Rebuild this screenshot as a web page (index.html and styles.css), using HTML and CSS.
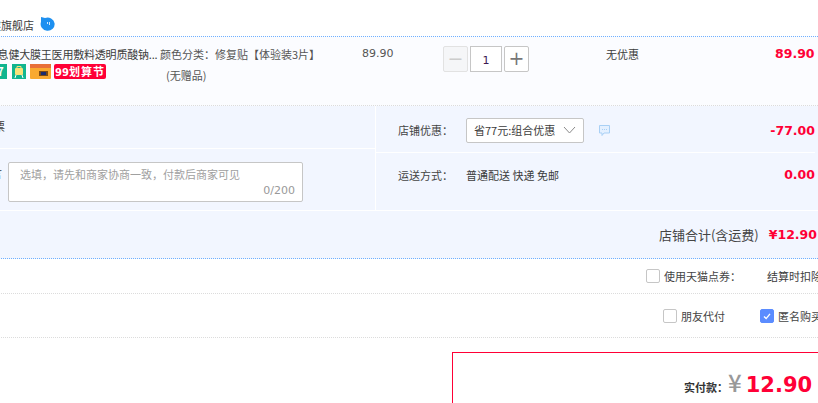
FILE: index.html

```html
<!DOCTYPE html>
<html lang="zh-CN">
<head>
  <meta charset="UTF-8">
  <title>确认订单</title>
  <link rel="stylesheet" href="styles.css">
</head>
<body>
  <div class="page">
    <div class="shop">
      <span class="shop-name">瑞健旗舰店</span>
      <svg class="shop-chat" width="16" height="15" viewBox="0 0 16 15">
        <path d="M2 1 L6 2 A7 6.6 0 1 1 2 6 Z" fill="#1e90f0"/>
        <rect x="8" y="6" width="1" height="2" fill="#cfe8ff"/>
        <rect x="10" y="6" width="1" height="3" fill="#cfe8ff"/>
      </svg>
    </div>

    <div class="item">
      <div class="item-main">
        <div class="item-title">修复息健大膜王医用敷料透明质酸钠...</div>
        <div class="tags">
          <span class="tag-seven">7</span>
          <svg class="tag-bag" width="14" height="15" viewBox="0 0 14 15">
            <rect width="14" height="15" fill="#10b58f"/>
            <rect x="3" y="4" width="8" height="7" rx="1" fill="#f6e27a"/>
            <path d="M5 4 V2.5 H9 V4" fill="none" stroke="#f6e27a"/>
            <path d="M4 11 L3 14 M10 11 L11 14" stroke="#fff"/>
          </svg>
          <svg class="tag-card" width="21" height="15" viewBox="0 0 21 15">
            <rect width="21" height="15" rx="1" fill="#f9a92f"/>
            <rect width="21" height="4" fill="#e8703a"/>
            <rect x="9" y="7" width="9" height="5" fill="#7a4a12"/>
            <rect x="11" y="8" width="5" height="3" fill="#1c2c6e"/>
          </svg>
          <span class="tag-sale"><b>99</b>划算节</span>
        </div>
      </div>
      <div class="item-spec">
        <div>颜色分类：修复贴【体验装3片】</div>
        <div class="item-gift">(无赠品)</div>
      </div>
      <div class="item-price">89.90</div>
      <div class="stepper">
        <span class="step step-off">−</span>
        <span class="step-num">1</span>
        <span class="step">+</span>
      </div>
      <div class="item-promo">无优惠</div>
      <div class="item-sum">89.90</div>
    </div>

    <div class="extra">
      <div class="extra-grid">
        <div class="extra-left">
          <div class="invoice">开具发票</div>
          <div class="memo">
            <span class="memo-label">给卖家留言</span>
            <div class="memo-box">
              <div class="memo-hint">选填，请先和商家协商一致，付款后商家可见</div>
              <div class="memo-count">0/200</div>
            </div>
          </div>
        </div>
        <div class="extra-right">
          <div class="line line-promo">
            <span class="line-label">店铺优惠：</span>
            <div class="select">
              <span>省77元:组合优惠</span>
              <svg width="13" height="8" viewBox="0 0 13 8"><path d="M1 1 L6.5 7 L12 1" fill="none" stroke="#8a8a8a"/></svg>
            </div>
            <svg class="line-note" width="11" height="11" viewBox="0 0 11 11">
              <path d="M0.5 0.5 H10.5 V8 H5 L3 10.5 V8 H0.5 Z" fill="#e4f0ff" stroke="#a9d0f5"/>
              <path d="M3 4.5 H8" stroke="#a9d0f5" stroke-dasharray="1 1"/>
            </svg>
            <span class="line-value">-77.00</span>
          </div>
          <div class="line line-ship">
            <span class="line-label">运送方式：</span>
            <span class="line-text">普通配送 快递 免邮</span>
            <span class="line-value">0.00</span>
          </div>
        </div>
      </div>
      <div class="total">
        <span class="total-label">店铺合计(含运费)</span>
        <span class="total-value">¥12.90</span>
      </div>
    </div>

    <div class="option option-coupon">
      <label class="check"><i class="box"></i>使用天猫点券：</label>
      <span class="coupon-note">结算时扣除</span>
    </div>
    <div class="option option-pay">
      <label class="check"><i class="box"></i>朋友代付</label>
      <label class="check check-anon">
        <i class="box box-on">
          <svg width="14" height="14" viewBox="0 0 14 14"><path d="M3.5 7.5 L6 10 L10.5 4.5" fill="none" stroke="#fff" stroke-width="1.6"/></svg>
        </i>匿名购买
      </label>
    </div>

    <div class="pay">
      <span class="pay-label">实付款：</span>
      <span class="pay-yen">¥</span>
      <span class="pay-num">12.90</span>
    </div>
  </div>
</body>
</html>
```

FILE: styles.css

```css
html, body { margin: 0; height: 403px; overflow: hidden; background: #fff; }
body { font-family: "Noto Sans CJK SC", sans-serif; font-size: 11px; color: #3c3c3c; }
.page { margin-left: -40px; width: 900px; }

.shop { height: 36px; display: flex; align-items: flex-end; padding-left: 19px; box-sizing: border-box; }
.shop-name { line-height: 16px; margin-bottom: 3px; }
.shop-chat { margin: 0 0 5px 5px; }

.item { display: flex; height: 68px; background: #fbfcff; border-top: 1px dotted #6fb0ff; border-bottom: 1px dotted #dcdcdc; }
.item-main { width: 200px; padding: 9px 0 0 0; box-sizing: border-box; overflow: hidden; }
.item-title { white-space: nowrap; line-height: 16px; margin-left: 16px; letter-spacing: -0.2px; }
.tags { display: flex; align-items: center; margin-top: 2px; padding-left: 40px; height: 15px; }
.tag-seven { width: 13px; height: 15px; margin-left: -6px; background: #10b58f; color: #fff; font-weight: bold; font-size: 11px; line-height: 15px; text-align: center; }
.tag-bag { margin-left: 5px; }
.tag-card { margin-left: 4px; }
.tag-sale { width: 52px; height: 15px; margin-left: 3px; background: #ff0036; border-radius: 2px; color: #fff; font-weight: bold; font-size: 11px; letter-spacing: 1px; line-height: 15px; text-align: center; white-space: nowrap; }
.tag-sale b { font-family: "DejaVu Sans", sans-serif; font-size: 10px; letter-spacing: 0; }
.item-spec { width: 202px; padding-top: 9px; box-sizing: border-box; line-height: 16px; color: #555; white-space: nowrap; }
.item-gift { margin: 5px 0 0 6px; }
.item-price { width: 81px; padding-top: 9px; box-sizing: border-box; font-family: "DejaVu Sans", sans-serif; font-size: 11px; line-height: 15px; color: #555; }
.stepper { width: 162px; display: flex; gap: 2px; padding-top: 9px; align-items: flex-start; }
.step, .step-num { height: 24px; border: 1px solid #c6c6c6; border-radius: 2px; background: #fff; text-align: center; box-sizing: content-box; }
.step { width: 23px; font-family: "DejaVu Sans", sans-serif; font-size: 19px; line-height: 22px; color: #777; }
.step-off { background: #f5f6f8; border-color: #e2e2e2; color: #ccc; }
.step-num { width: 30px; font-family: "DejaVu Sans", sans-serif; font-size: 11px; line-height: 27px; color: #3a1a50; border-radius: 0; }
.item-promo { width: 150px; padding-top: 9px; line-height: 16px; margin-left: 1px; }
.item-sum { margin-left: 19px; padding-top: 8px; width: 40px; font-family: "DejaVu Sans", sans-serif; font-weight: bold; font-size: 12.5px; line-height: 18px; color: #ff0036; }

.extra { background: #f2f6ff; height: 152px; border-bottom: 1px dotted #6fb0ff; }
.extra-grid { display: flex; height: 104px; border-bottom: 1px solid #fff; }
.extra-left { width: 416px; border-right: 1px solid #fff; box-sizing: border-box; }
.invoice { height: 42px; line-height: 40px; border-bottom: 1px solid #fff; padding-left: 1px; }
.memo { display: flex; padding-top: 13px; }
.memo-label { width: 42px; margin-right: 6px; display: flex; justify-content: flex-end; line-height: 22px; white-space: nowrap; }
.memo-box { width: 295px; height: 40px; box-sizing: border-box; background: #fff; border: 1px solid #c6c6c6; border-radius: 2px; padding: 3px 7px 0 11px; }
.memo-hint { color: #a0a0a0; line-height: 16px; }
.memo-count { font-family: "DejaVu Sans", sans-serif; color: #999; font-size: 11px; line-height: 15px; text-align: right; margin-top: 1px; }
.extra-right { flex: 1; padding-right: 45px; }
.line { display: flex; padding-left: 22px; }
.line-label { width: 68px; color: #444; }
.line-value { margin-left: auto; font-family: "DejaVu Sans", sans-serif; font-weight: bold; font-size: 12.5px; color: #ff0036; }
.line-promo { height: 46px; align-items: center; border-bottom: 1px solid #fff; }
.line-ship { padding-top: 14px; align-items: center; line-height: 16px; }
.select { width: 118px; height: 25px; box-sizing: border-box; margin-top: 2px; border: 1px solid #c6c6c6; border-radius: 2px; background: #fff; display: flex; align-items: center; justify-content: space-between; padding: 0 7px; white-space: nowrap; }
.line-note { margin: 2px 0 0 15px; }
.line-promo .line-label, .line-promo .line-value { margin-top: 2px; }
.total { height: 47px; display: flex; justify-content: flex-end; align-items: center; padding-right: 43px; }
.total-label { font-size: 13px; color: #444; }
.total-value { margin-left: 10px; font-family: "DejaVu Sans", sans-serif; font-weight: bold; font-size: 12.5px; color: #ff0036; }

.option { display: flex; align-items: center; border-bottom: 1px dotted #dcdcdc; white-space: nowrap; box-sizing: border-box; }
.option-coupon { height: 35px; padding-left: 686px; }
.option-pay { height: 44px; padding-left: 703px; }
.check { display: flex; align-items: center; color: #444; }
.box { width: 14px; height: 14px; border: 1px solid #c6c6c6; border-radius: 2px; box-sizing: border-box; margin-right: 4px; background: #fff; }
.box-on { background: #5b8cff; border-color: #5b8cff; display: flex; align-items: center; justify-content: center; }
.coupon-note { margin-left: 26px; }
.check-anon { margin-left: 35px; }

.pay { margin: 14px 0 0 492px; height: 80px; border: 1px solid #ff0036; padding: 13px 0 0 231px; display: flex; align-items: baseline; white-space: nowrap; }
.pay-label { font-weight: bold; font-size: 11px; color: #333; }
.pay-yen { font-weight: 500; font-size: 24px; line-height: 32px; color: #999; }
.pay-num { margin-left: 4px; font-family: "DejaVu Sans", sans-serif; font-weight: bold; font-size: 21px; line-height: 32px; color: #ff0036; }
```
